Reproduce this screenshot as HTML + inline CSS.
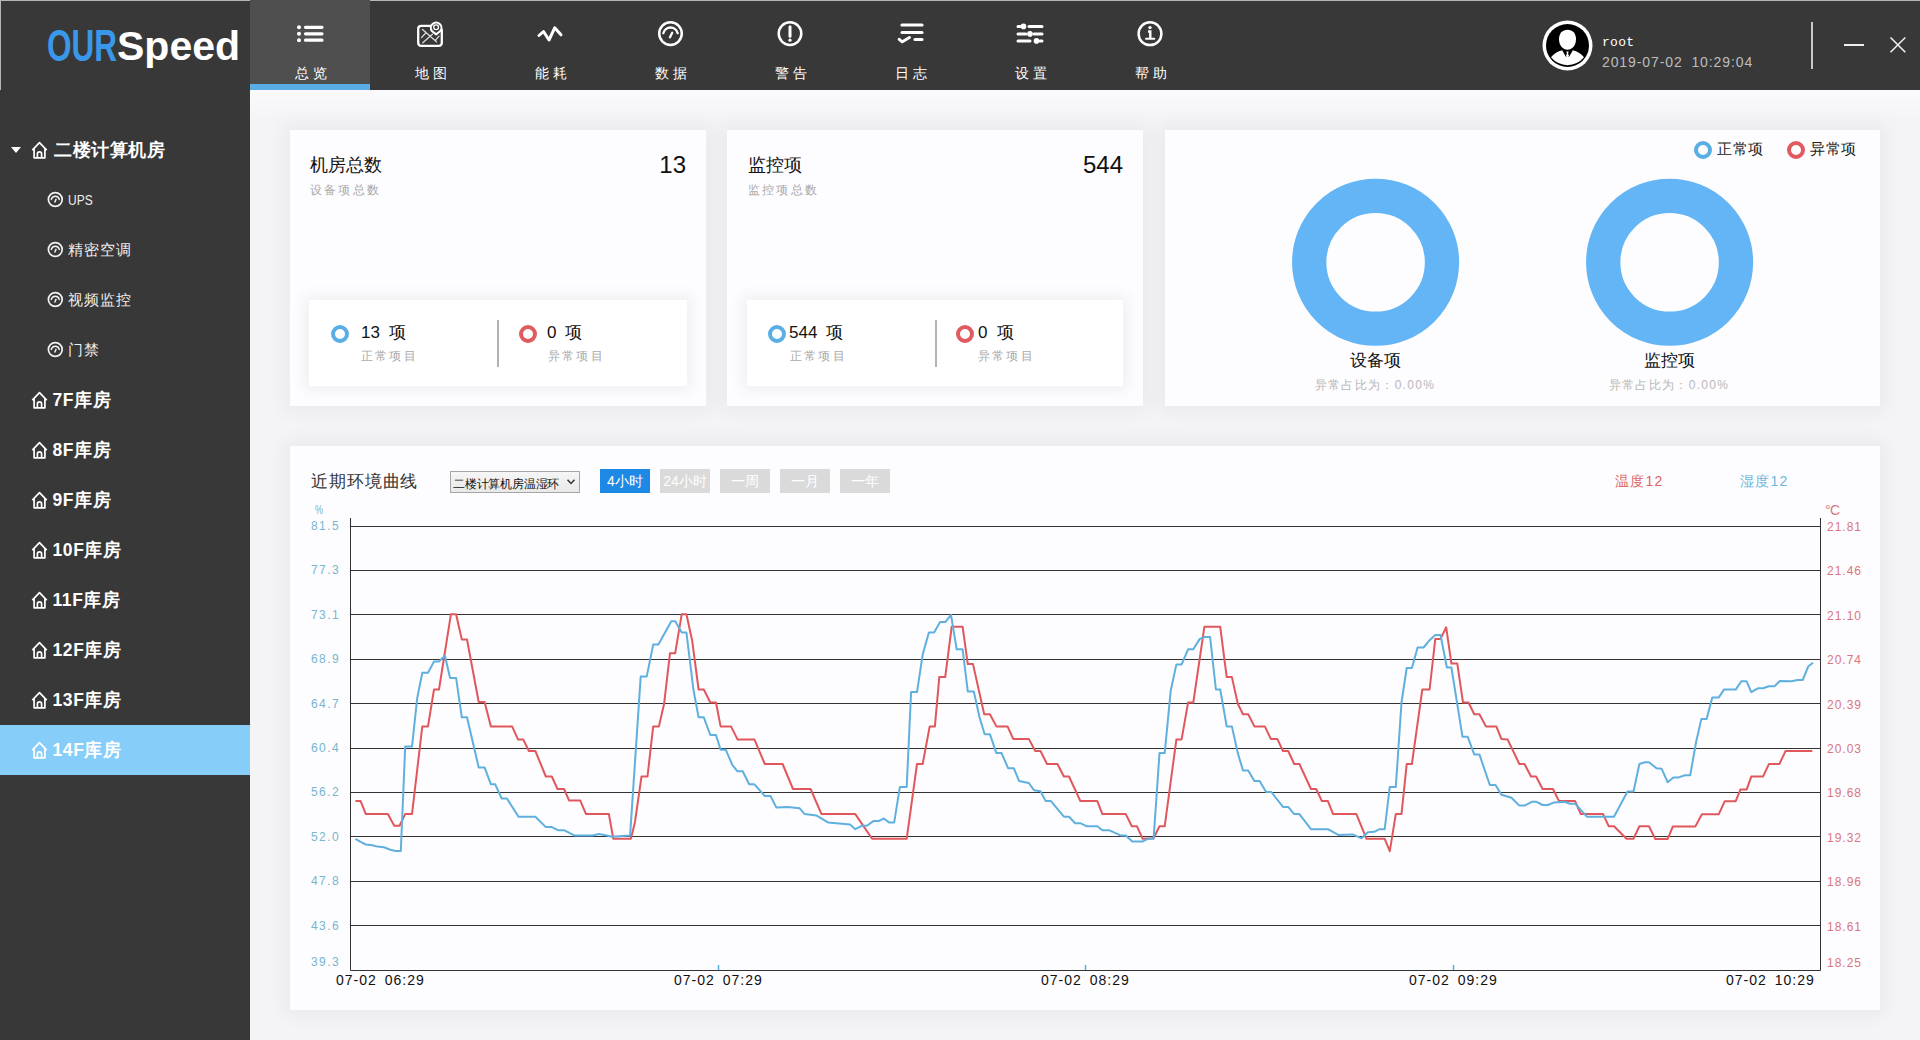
<!DOCTYPE html>
<html><head><meta charset="utf-8">
<style>
*{box-sizing:border-box;margin:0;padding:0}
html,body{width:1920px;height:1040px;overflow:hidden;background:#f4f3f5;font-family:"Liberation Sans",sans-serif}
.abs{position:absolute}
#hdr{left:0;top:0;width:1920px;height:90px;background:#383838;border-top:1px solid #b5b5b5}
#logo{left:48px;top:20px;font-size:41px;font-weight:bold;line-height:46px;white-space:nowrap}
.tab{top:0;width:120px;height:90px;color:#fff}
.tab.on{background:#4f4f4f}
.tab .lb{position:absolute;left:1px;width:120px;top:65px;text-align:center;font-size:14px;letter-spacing:4px;text-indent:4px;line-height:16px}
.tab svg{position:absolute;left:44px;top:18px}
#side{left:0;top:90px;width:250px;height:950px;background:#383838}
.it{left:0;width:250px;height:50px;color:#fff}
.it .t{position:absolute;left:52.5px;top:17.2px;font-size:17.5px;font-weight:bold;line-height:18px;letter-spacing:0.6px;white-space:nowrap}
.it .s{position:absolute;left:68px;top:18.3px;font-size:15px;line-height:16px;letter-spacing:0.9px;white-space:nowrap;color:#eee}
.it svg.h{position:absolute;left:30.5px;top:16.5px}
.it svg.g{position:absolute;left:47px;top:17px}
.card{background:#fdfcfe;box-shadow:0 0 18px 6px rgba(0,0,0,0.045)}
.inner{background:#fff;box-shadow:0 0 14px 5px rgba(0,0,0,0.055)}
.ct{font-size:18px;line-height:20px;color:#111;white-space:nowrap;margin-top:1px}
.cs{font-size:12px;line-height:14px;color:#aaa;letter-spacing:2.2px;white-space:nowrap;margin-top:1px}
.num{font-size:24px;line-height:26px;color:#111;text-align:right;white-space:nowrap}
.ring{width:18px;height:18px;border-radius:50%;border:4px solid #5aaee6}
.ring.r{border-color:#e05a5f}
.vn{font-size:17px;line-height:18px;color:#111;white-space:nowrap}
.btn{top:469px;width:50px;height:24px;font-size:14px;line-height:25px;text-align:center;color:#fff;background:#dadada}
.yl{font-size:12px;line-height:12px;color:#78b6cf;letter-spacing:1.4px;white-space:nowrap;margin-top:0}
.yr{font-size:12px;line-height:12px;color:#d9777c;letter-spacing:1px;white-space:nowrap;margin-top:1px}
.xl{font-size:14px;line-height:14px;color:#111;white-space:nowrap;letter-spacing:1px;word-spacing:3px;margin-top:0}
</style></head><body>
<div id="hdr" class="abs"></div>
<div id="logo" class="abs" style="color:#3a98ea;font-size:45px;top:23px;left:47px;transform:scaleX(0.70);transform-origin:0 0">OUR</div><div class="abs" style="left:117px;top:23px;font-size:41px;font-weight:bold;line-height:46px;color:#fff">Speed</div>
<div class="abs" style="left:0;top:0;width:1px;height:90px;background:#b5b5b5"></div>

<!-- tabs -->
<div class="abs tab on" style="left:250px"><div class="lb">总览</div></div>
<div class="abs" style="left:250px;top:84px;width:120px;height:6px;background:#5aaee6"></div>
<div class="abs tab" style="left:370px"><div class="lb">地图</div></div>
<div class="abs tab" style="left:490px"><div class="lb">能耗</div></div>
<div class="abs tab" style="left:610px"><div class="lb">数据</div></div>
<div class="abs tab" style="left:730px"><div class="lb">警告</div></div>
<div class="abs tab" style="left:850px"><div class="lb">日志</div></div>
<div class="abs tab" style="left:970px"><div class="lb">设置</div></div>
<div class="abs tab" style="left:1090px"><div class="lb">帮助</div></div>


<!-- header icons -->
<svg class="abs" style="left:290px;top:18px" width="40" height="32" viewBox="290 18 40 32" fill="none" stroke="#fff" stroke-linecap="round">
<circle cx="299" cy="27.3" r="2" fill="#fff" stroke="none"/><circle cx="299" cy="33.8" r="2" fill="#fff" stroke="none"/><circle cx="299" cy="40.2" r="2" fill="#fff" stroke="none"/>
<path d="M305.5 27.3H322M305.5 33.8H322M305.5 40.2H322" stroke-width="3.2"/></svg>
<svg class="abs" style="left:410px;top:14px" width="40" height="40" viewBox="410 14 40 40" fill="none" stroke="#fff" stroke-linecap="round" stroke-linejoin="round">
<path d="M430.5 25.9H421.2Q418.2 25.9 418.2 28.9V42.8Q418.2 45.8 421.2 45.8H438.8Q441.8 45.8 441.8 42.8V30" stroke-width="2.3"/>
<path d="M436.1 34.3L431.9 31A5.3 5.3 0 1 1 440.4 31Z" stroke-width="2.1"/>
<circle cx="436.1" cy="27.3" r="2.4" stroke-width="1.3"/>
<path d="M422.5 29.4L436.5 41.8M421.5 37.6L426.1 32.5M422.8 42.7L432.4 34.3M435.5 40.2L439 36.1" stroke-width="1.3" stroke="#ddd"/></svg>
<svg class="abs" style="left:530px;top:18px" width="40" height="32" viewBox="530 18 40 32" fill="none" stroke="#fff" stroke-width="3" stroke-linecap="round" stroke-linejoin="round">
<path d="M539 35.5L543.5 31.5L549 40L554.7 27.8L561 34.8"/></svg>
<svg class="abs" style="left:650px;top:14px" width="40" height="40" viewBox="650 14 40 40" fill="none" stroke="#fff" stroke-linecap="round">
<circle cx="670.5" cy="33.6" r="11.3" stroke-width="2.5"/>
<path d="M663.3 33.2A7.4 7.4 0 0 1 677.7 33.2" stroke-width="2.3"/>
<path d="M670 37.2L672.2 32.8" stroke-width="2.3"/></svg>
<svg class="abs" style="left:770px;top:14px" width="40" height="40" viewBox="770 14 40 40" fill="none" stroke="#fff" stroke-linecap="round">
<circle cx="790" cy="33.6" r="11.3" stroke-width="2.5"/>
<path d="M790 26.8V36.2" stroke-width="3"/><circle cx="790" cy="40.2" r="1.6" fill="#fff" stroke="none"/></svg>
<svg class="abs" style="left:890px;top:14px" width="40" height="40" viewBox="890 14 40 40" fill="none" stroke="#fff" stroke-linecap="round" stroke-linejoin="round">
<path d="M902 25H922M902 32.5H922M915 39.5H922" stroke-width="3.2"/>
<path d="M899.2 39.3L902.3 41.8L909.5 37.5" stroke-width="3"/></svg>
<svg class="abs" style="left:1010px;top:14px" width="40" height="40" viewBox="1010 14 40 40" fill="none" stroke="#fff" stroke-linecap="round">
<path d="M1018 26.4H1021M1029 26.4H1042M1018 33.9H1026M1034 33.9H1042M1018 40.9H1030M1040 40.9H1042" stroke-width="3"/>
<circle cx="1023.5" cy="26.4" r="2.8" fill="#fff" stroke="none"/><circle cx="1030" cy="33.9" r="2.8" fill="#fff" stroke="none"/><circle cx="1036.5" cy="40.9" r="2.8" fill="#fff" stroke="none"/></svg>
<svg class="abs" style="left:1130px;top:14px" width="40" height="40" viewBox="1130 14 40 40" fill="none" stroke="#fff" stroke-linecap="round">
<circle cx="1150" cy="33.7" r="11.4" stroke-width="2.5"/>
<circle cx="1150" cy="27.6" r="1.7" fill="#fff" stroke="none"/>
<path d="M1148 31.5H1150.3V38" stroke-width="2.4" stroke-linecap="butt"/><path d="M1146 38.7H1154.3" stroke-width="2"/></svg>

<!-- user -->
<svg class="abs" style="left:1540px;top:18px" width="56" height="56" viewBox="1540 18 56 56">
<circle cx="1567.5" cy="45.5" r="25" fill="#fff"/><circle cx="1567.5" cy="45.5" r="21.5" fill="#000"/>
<path d="M1567.5 29.8C1572.5 29.8 1576.2 33.5 1576 39.5C1575.8 45.5 1572 49.8 1567.5 49.8C1563 49.8 1559.2 45.5 1559 39.5C1558.8 33.5 1562.5 29.8 1567.5 29.8Z" fill="#fff"/>
<path d="M1551 57.3Q1555.5 51.6 1562.2 50.2L1566 57L1569 57L1572.8 50.2Q1579.5 51.6 1584 57.3A21.2 21.2 0 0 1 1551 57.3Z" fill="#fff"/>
<path d="M1566.4 51.6H1568.6L1568.1 53.6L1569.1 56.2L1567.5 57.6L1565.9 56.2L1566.9 53.6Z" fill="#fff"/></svg>
<div class="abs" style="left:1602px;top:35px;font-family:'Liberation Mono',monospace;font-size:13px;line-height:16px;color:#fff;letter-spacing:0.3px">root</div>
<div class="abs" style="left:1602px;top:54px;font-size:14px;line-height:16px;color:#bdbdbd;letter-spacing:0.9px;word-spacing:4px">2019-07-02 10:29:04</div>
<div class="abs" style="left:1811px;top:22px;width:2px;height:47px;background:#c9c9c9"></div>
<div class="abs" style="left:1844px;top:44px;width:20px;height:2px;background:#eee"></div>
<svg class="abs" style="left:1886px;top:33px" width="24" height="24" viewBox="1886 33 24 24" stroke="#eee" stroke-width="1.6"><path d="M1890.5 37.5L1905.3 52.3M1905.3 37.5L1890.5 52.3"/></svg>

<!-- sidebar -->
<div id="side" class="abs"></div>
<div class="abs" style="left:0;top:725px;width:250px;height:50px;background:#87cdfa"></div>
<svg class="abs" style="left:10px;top:146px" width="12" height="8" viewBox="0 0 12 8"><path d="M1 1H11L6 7Z" fill="#fff"/></svg>
<div class="abs it" style="top:124px"><svg class="h" width="18" height="19" viewBox="0 0 18 19" fill="none" stroke="#fff" stroke-width="1.7" stroke-linejoin="round"><path d="M1.3 9.1L8.5 1.6L15.7 9.1M3.1 7.4V16.8H13.9V7.4M6.4 16.8V12.9Q6.4 10.9 8.5 10.9Q10.6 10.9 10.6 12.9V16.8"/></svg><div class="t" style="left:54px">二楼计算机房</div></div>
<div class="abs it" style="top:174px"><svg class="g" width="17" height="17" viewBox="0 0 17 17" fill="none" stroke="#f2f2f2" stroke-linecap="round"><circle cx="8.3" cy="8.5" r="6.9" stroke-width="1.7"/><path d="M4.3 8.4A4.1 4.1 0 0 1 12.3 8.4" stroke-width="1.5"/><path d="M7.9 11L9 8.4" stroke-width="1.5"/></svg><div class="s" style="letter-spacing:0;transform:scaleX(0.8);transform-origin:0 0">UPS</div></div>
<div class="abs it" style="top:224px"><svg class="g" width="17" height="17" viewBox="0 0 17 17" fill="none" stroke="#f2f2f2" stroke-linecap="round"><circle cx="8.3" cy="8.5" r="6.9" stroke-width="1.7"/><path d="M4.3 8.4A4.1 4.1 0 0 1 12.3 8.4" stroke-width="1.5"/><path d="M7.9 11L9 8.4" stroke-width="1.5"/></svg><div class="s">精密空调</div></div>
<div class="abs it" style="top:274px"><svg class="g" width="17" height="17" viewBox="0 0 17 17" fill="none" stroke="#f2f2f2" stroke-linecap="round"><circle cx="8.3" cy="8.5" r="6.9" stroke-width="1.7"/><path d="M4.3 8.4A4.1 4.1 0 0 1 12.3 8.4" stroke-width="1.5"/><path d="M7.9 11L9 8.4" stroke-width="1.5"/></svg><div class="s">视频监控</div></div>
<div class="abs it" style="top:324px"><svg class="g" width="17" height="17" viewBox="0 0 17 17" fill="none" stroke="#f2f2f2" stroke-linecap="round"><circle cx="8.3" cy="8.5" r="6.9" stroke-width="1.7"/><path d="M4.3 8.4A4.1 4.1 0 0 1 12.3 8.4" stroke-width="1.5"/><path d="M7.9 11L9 8.4" stroke-width="1.5"/></svg><div class="s">门禁</div></div>
<div class="abs it" style="top:374px"><svg class="h" width="18" height="19" viewBox="0 0 18 19" fill="none" stroke="#fff" stroke-width="1.7" stroke-linejoin="round"><path d="M1.3 9.1L8.5 1.6L15.7 9.1M3.1 7.4V16.8H13.9V7.4M6.4 16.8V12.9Q6.4 10.9 8.5 10.9Q10.6 10.9 10.6 12.9V16.8"/></svg><div class="t">7F库房</div></div>
<div class="abs it" style="top:424px"><svg class="h" width="18" height="19" viewBox="0 0 18 19" fill="none" stroke="#fff" stroke-width="1.7" stroke-linejoin="round"><path d="M1.3 9.1L8.5 1.6L15.7 9.1M3.1 7.4V16.8H13.9V7.4M6.4 16.8V12.9Q6.4 10.9 8.5 10.9Q10.6 10.9 10.6 12.9V16.8"/></svg><div class="t">8F库房</div></div>
<div class="abs it" style="top:474px"><svg class="h" width="18" height="19" viewBox="0 0 18 19" fill="none" stroke="#fff" stroke-width="1.7" stroke-linejoin="round"><path d="M1.3 9.1L8.5 1.6L15.7 9.1M3.1 7.4V16.8H13.9V7.4M6.4 16.8V12.9Q6.4 10.9 8.5 10.9Q10.6 10.9 10.6 12.9V16.8"/></svg><div class="t">9F库房</div></div>
<div class="abs it" style="top:524px"><svg class="h" width="18" height="19" viewBox="0 0 18 19" fill="none" stroke="#fff" stroke-width="1.7" stroke-linejoin="round"><path d="M1.3 9.1L8.5 1.6L15.7 9.1M3.1 7.4V16.8H13.9V7.4M6.4 16.8V12.9Q6.4 10.9 8.5 10.9Q10.6 10.9 10.6 12.9V16.8"/></svg><div class="t">10F库房</div></div>
<div class="abs it" style="top:574px"><svg class="h" width="18" height="19" viewBox="0 0 18 19" fill="none" stroke="#fff" stroke-width="1.7" stroke-linejoin="round"><path d="M1.3 9.1L8.5 1.6L15.7 9.1M3.1 7.4V16.8H13.9V7.4M6.4 16.8V12.9Q6.4 10.9 8.5 10.9Q10.6 10.9 10.6 12.9V16.8"/></svg><div class="t">11F库房</div></div>
<div class="abs it" style="top:624px"><svg class="h" width="18" height="19" viewBox="0 0 18 19" fill="none" stroke="#fff" stroke-width="1.7" stroke-linejoin="round"><path d="M1.3 9.1L8.5 1.6L15.7 9.1M3.1 7.4V16.8H13.9V7.4M6.4 16.8V12.9Q6.4 10.9 8.5 10.9Q10.6 10.9 10.6 12.9V16.8"/></svg><div class="t">12F库房</div></div>
<div class="abs it" style="top:674px"><svg class="h" width="18" height="19" viewBox="0 0 18 19" fill="none" stroke="#fff" stroke-width="1.7" stroke-linejoin="round"><path d="M1.3 9.1L8.5 1.6L15.7 9.1M3.1 7.4V16.8H13.9V7.4M6.4 16.8V12.9Q6.4 10.9 8.5 10.9Q10.6 10.9 10.6 12.9V16.8"/></svg><div class="t">13F库房</div></div>
<div class="abs it" style="top:724px"><svg class="h" width="18" height="19" viewBox="0 0 18 19" fill="none" stroke="#fff" stroke-width="1.7" stroke-linejoin="round"><path d="M1.3 9.1L8.5 1.6L15.7 9.1M3.1 7.4V16.8H13.9V7.4M6.4 16.8V12.9Q6.4 10.9 8.5 10.9Q10.6 10.9 10.6 12.9V16.8"/></svg><div class="t">14F库房</div></div>

<div class="abs" style="left:250px;top:90px;width:1670px;height:30px;background:linear-gradient(#faf9fb,#f4f3f5)"></div>
<!-- cards -->
<div class="abs card" style="left:290px;top:130px;width:416px;height:276px"></div>
<div class="abs card" style="left:727px;top:130px;width:416px;height:276px"></div>
<div class="abs card" style="left:1165px;top:130px;width:715px;height:276px"></div>
<div class="abs card" style="left:290px;top:446px;width:1590px;height:564px"></div>


<!-- card1 -->
<div class="abs ct" style="left:310px;top:154px">机房总数</div>
<div class="abs cs" style="left:310px;top:182px">设备项总数</div>
<div class="abs num" style="left:586px;top:152px;width:100px;font-size:24px">13</div>
<div class="abs inner" style="left:309px;top:300px;width:378px;height:86px"></div>
<div class="abs ring" style="left:331px;top:325px;width:18px;height:18px;border-width:4px"></div>
<div class="abs vn" style="left:361px;top:324px">13<span style="margin-left:9px">项</span></div>
<div class="abs cs" style="left:361px;top:348px">正常项目</div>
<div class="abs" style="left:497px;top:320px;width:2px;height:47px;background:#b3b3b3"></div>
<div class="abs ring r" style="left:519px;top:325px;width:18px;height:18px;border-width:4px"></div>
<div class="abs vn" style="left:547px;top:324px">0<span style="margin-left:9px">项</span></div>
<div class="abs cs" style="left:548px;top:348px">异常项目</div>
<!-- card2 -->
<div class="abs ct" style="left:748px;top:154px">监控项</div>
<div class="abs cs" style="left:748px;top:182px">监控项总数</div>
<div class="abs num" style="left:1023px;top:152px;width:100px;font-size:24px">544</div>
<div class="abs inner" style="left:747px;top:300px;width:376px;height:86px"></div>
<div class="abs ring" style="left:768px;top:325px;width:18px;height:18px;border-width:4px"></div>
<div class="abs vn" style="left:789px;top:324px">544<span style="margin-left:9px">项</span></div>
<div class="abs cs" style="left:790px;top:348px">正常项目</div>
<div class="abs" style="left:935px;top:320px;width:2px;height:47px;background:#b3b3b3"></div>
<div class="abs ring r" style="left:956px;top:325px;width:18px;height:18px;border-width:4px"></div>
<div class="abs vn" style="left:978px;top:324px">0<span style="margin-left:10px">项</span></div>
<div class="abs cs" style="left:978px;top:348px">异常项目</div>
<!-- card3 -->
<div class="abs ring" style="left:1694px;top:141px;width:18px;height:18px;border-width:4px"></div>
<div class="abs" style="left:1717px;top:140px;font-size:15px;line-height:17px;color:#222;letter-spacing:0.5px">正常项</div>
<div class="abs ring r" style="left:1787px;top:141px;width:18px;height:18px;border-width:4px"></div>
<div class="abs" style="left:1810px;top:140px;font-size:15px;line-height:17px;color:#222;letter-spacing:0.5px">异常项</div>
<svg class="abs" style="left:1285px;top:172px" width="480" height="180" viewBox="1285 172 480 180">
<circle cx="1375.6" cy="262.3" r="66.4" fill="none" stroke="#64b5f6" stroke-width="34.3"/>
<circle cx="1669.6" cy="262.3" r="66.4" fill="none" stroke="#64b5f6" stroke-width="34.3"/></svg>
<div class="abs" style="left:1275px;top:351px;width:200px;text-align:center;font-size:17px;line-height:20px;color:#111;font-weight:500">设备项</div>
<div class="abs cs" style="left:1275px;top:377px;width:200px;text-align:center;color:#b8b8b8;letter-spacing:1.3px">异常占比为：0.00%</div>
<div class="abs" style="left:1569px;top:351px;width:200px;text-align:center;font-size:17px;line-height:20px;color:#111;font-weight:500">监控项</div>
<div class="abs cs" style="left:1569px;top:377px;width:200px;text-align:center;color:#b8b8b8;letter-spacing:1.3px">异常占比为：0.00%</div>

<!-- chart -->
<div class="abs" style="left:311px;top:472px;font-size:17px;line-height:20px;color:#333;letter-spacing:0.9px">近期环境曲线</div>
<div class="abs" style="left:450px;top:471px;width:130px;height:22px;border:1px solid #a6a6a6;background:linear-gradient(#f6f6f6,#e9e9e9)"></div>
<div class="abs" style="left:453px;top:476px;font-size:12px;line-height:16px;color:#111;letter-spacing:-0.2px">二楼计算机房温湿环</div>
<svg class="abs" style="left:566px;top:478px" width="10" height="8" viewBox="0 0 10 8"><path d="M1.5 1.8L5 5.5L8.5 1.8" fill="none" stroke="#333" stroke-width="1.5"/></svg>
<div class="abs btn" style="left:600px;background:#1e88e5">4小时</div>
<div class="abs btn" style="left:660px">24小时</div>
<div class="abs btn" style="left:720px">一周</div>
<div class="abs btn" style="left:780px">一月</div>
<div class="abs btn" style="left:840px">一年</div>
<div class="abs" style="left:1615px;top:473px;font-size:14px;line-height:16px;color:#de6464;letter-spacing:1.2px">温度12</div>
<div class="abs" style="left:1740px;top:473px;font-size:14px;line-height:16px;color:#6ab7dc;letter-spacing:1.2px">湿度12</div>
<div class="abs yl" style="left:315px;top:504px;font-size:12px;letter-spacing:0;transform:scaleX(0.75);transform-origin:0 0">%</div>
<div class="abs yr" style="left:1825px;top:503px;font-size:14px;letter-spacing:-0.5px">&deg;C</div>
<div class="abs yl" style="left:311px;top:520px">81.5</div>
<div class="abs yr" style="left:1827px;top:520px">21.81</div>
<div class="abs yl" style="left:311px;top:564px">77.3</div>
<div class="abs yr" style="left:1827px;top:564px">21.46</div>
<div class="abs yl" style="left:311px;top:609px">73.1</div>
<div class="abs yr" style="left:1827px;top:609px">21.10</div>
<div class="abs yl" style="left:311px;top:653px">68.9</div>
<div class="abs yr" style="left:1827px;top:653px">20.74</div>
<div class="abs yl" style="left:311px;top:698px">64.7</div>
<div class="abs yr" style="left:1827px;top:698px">20.39</div>
<div class="abs yl" style="left:311px;top:742px">60.4</div>
<div class="abs yr" style="left:1827px;top:742px">20.03</div>
<div class="abs yl" style="left:311px;top:786px">56.2</div>
<div class="abs yr" style="left:1827px;top:786px">19.68</div>
<div class="abs yl" style="left:311px;top:831px">52.0</div>
<div class="abs yr" style="left:1827px;top:831px">19.32</div>
<div class="abs yl" style="left:311px;top:875px">47.8</div>
<div class="abs yr" style="left:1827px;top:875px">18.96</div>
<div class="abs yl" style="left:311px;top:920px">43.6</div>
<div class="abs yr" style="left:1827px;top:920px">18.61</div>
<div class="abs yl" style="left:311px;top:956px">39.3</div>
<div class="abs yr" style="left:1827px;top:956px">18.25</div>
<svg class="abs" style="left:290px;top:446px" width="1590" height="564" viewBox="290 446 1590 564">
<g stroke="#333" stroke-width="1" fill="none"><path d="M350 526.5H1821" /><path d="M350 570.5H1821" /><path d="M350 614.5H1821" /><path d="M350 659.5H1821" /><path d="M350 703.5H1821" /><path d="M350 748.5H1821" /><path d="M350 792.5H1821" /><path d="M350 836.5H1821" /><path d="M350 881.5H1821" /><path d="M350 925.5H1821" /><path d="M350.5 518V970.5H1820.5V518"/></g>
<g stroke="#5aaee0" stroke-width="1.5"><path d="M718.5 965V970M1085.5 965V970M1453.5 965V970"/></g>
<g id="curves"><g fill="none" stroke-width="2" stroke-linejoin="round"><path stroke="#e0575c" d="M355.4 801.1 L360.6 801.1 L365.8 814.1 L387.8 814.1 L394.3 825.8 L399.5 825.8 L405.2 814.1 L412.0 814.1 L422.3 726.4 L428.0 726.4 L434.0 689.5 L439.0 689.5 L450.9 614.3 L456.1 614.3 L461.8 639.5 L467.0 639.5 L478.7 702.0 L484.6 702.0 L490.9 726.4 L512.1 726.4 L518.0 739.4 L523.2 739.4 L528.9 751.0 L535.4 751.0 L545.8 776.5 L551.8 776.5 L557.5 789.0 L564.0 789.0 L569.2 800.6 L580.3 800.6 L586.0 814.1 L608.9 814.1 L613.3 838.8 L630.9 838.8 L635.0 821.9 L641.5 776.5 L647.5 776.5 L653.2 726.4 L658.9 726.4 L664.1 703.8 L670.0 653.2 L675.2 653.2 L681.7 614.3 L686.4 614.3 L692.1 640.2 L698.6 689.5 L703.8 689.5 L710.3 702.5 L716.0 702.5 L720.6 726.4 L731.0 726.4 L737.5 739.4 L754.4 739.4 L764.8 764.0 L782.6 764.0 L793.0 789.0 L810.6 789.0 L821.5 814.1 L855.3 814.1 L872.1 838.8 L906.7 838.8 L917.0 764.0 L922.7 764.0 L929.7 726.4 L934.9 726.4 L939.3 677.1 L945.2 677.1 L951.7 626.7 L962.6 626.7 L967.8 664.1 L973.0 664.1 L984.2 714.2 L989.9 714.2 L996.4 726.4 L1007.5 726.4 L1013.2 738.9 L1028.8 738.9 L1035.3 751.0 L1040.5 751.0 L1047.0 764.0 L1057.4 764.0 L1063.9 776.5 L1069.0 776.5 L1080.4 801.1 L1097.3 801.1 L1102.4 814.1 L1125.8 814.1 L1131.8 826.3 L1137.0 826.3 L1142.7 838.8 L1153.6 838.3 L1159.5 826.3 L1164.7 826.3 L1176.4 739.4 L1181.6 739.4 L1188.1 702.5 L1193.3 702.5 L1204.4 626.7 L1220.2 626.7 L1226.7 677.1 L1231.9 677.1 L1237.8 703.8 L1243.0 714.2 L1248.2 714.2 L1254.4 726.4 L1264.8 726.4 L1270.8 738.9 L1277.3 738.9 L1283.0 751.0 L1288.2 751.0 L1294.2 764.0 L1299.4 764.0 L1311.0 789.0 L1316.2 789.0 L1321.9 801.1 L1327.9 801.1 L1333.1 814.1 L1356.4 814.1 L1366.5 838.8 L1384.7 838.8 L1389.8 851.2 L1395.8 814.1 L1401.5 814.1 L1406.7 764.0 L1411.9 764.0 L1422.3 689.5 L1429.6 689.5 L1435.3 638.9 L1440.5 638.9 L1446.2 627.3 L1451.4 663.6 L1457.3 663.6 L1463.0 702.5 L1468.5 702.5 L1474.2 714.2 L1479.4 714.2 L1485.9 726.4 L1496.3 726.4 L1501.4 738.9 L1507.6 739.4 L1519.3 764.0 L1524.5 764.0 L1531.0 776.5 L1536.1 776.5 L1542.6 789.0 L1553.0 789.0 L1559.0 801.1 L1575.1 801.1 L1580.8 814.1 L1603.1 814.1 L1608.8 826.3 L1614.0 826.3 L1626.5 838.8 L1633.5 838.8 L1639.4 826.3 L1649.0 826.3 L1655.2 838.9 L1667.7 838.9 L1672.9 826.4 L1695.4 826.4 L1701.9 814.2 L1718.8 814.2 L1724.8 801.2 L1735.7 801.2 L1740.4 789.6 L1746.6 789.6 L1751.3 776.6 L1763.0 776.6 L1768.9 764.1 L1779.3 764.1 L1785.5 751.1 L1812.3 751.1"/><path stroke="#5fb0df" d="M355.4 838.8 L360.6 841.9 L365.8 844.5 L372.3 845.3 L377.4 846.6 L383.9 847.3 L390.4 849.7 L395.6 851.0 L400.8 851.0 L405.2 746.6 L412.0 746.6 L417.2 698.1 L422.3 672.7 L428.0 672.7 L434.0 661.5 L439.0 661.5 L444.9 655.8 L450.1 677.9 L456.1 677.9 L461.8 717.3 L467.0 717.3 L478.7 767.4 L484.6 767.4 L490.9 784.3 L495.2 784.3 L501.7 798.5 L506.9 798.5 L518.5 816.7 L535.4 816.7 L545.8 827.1 L551.8 827.1 L558.0 830.2 L564.0 830.2 L574.3 835.4 L592.5 835.4 L599.0 834.1 L604.2 834.9 L612.0 836.7 L630.1 835.4 L640.7 676.6 L646.7 676.6 L653.2 644.6 L658.4 644.6 L671.3 621.3 L675.2 621.3 L681.7 632.4 L686.4 632.4 L693.4 689.5 L698.6 717.3 L703.8 717.3 L710.3 735.0 L716.0 735.0 L720.6 749.8 L725.8 749.8 L732.3 764.8 L737.5 771.3 L742.7 771.3 L749.2 784.3 L754.4 784.3 L764.8 796.0 L770.5 796.0 L776.4 807.6 L787.8 807.1 L799.5 808.2 L804.7 814.1 L816.3 815.4 L828.0 822.4 L850.1 824.5 L855.3 829.2 L861.8 825.8 L866.9 825.8 L873.4 821.1 L878.6 821.1 L883.8 818.5 L889.0 822.4 L894.2 822.4 L899.9 786.9 L906.7 786.9 L911.1 692.1 L917.0 692.1 L922.7 654.5 L928.9 632.4 L934.1 632.4 L940.1 622.1 L945.2 622.1 L951.0 614.8 L956.7 649.3 L962.6 649.3 L967.8 691.4 L973.8 691.4 L979.5 717.3 L984.7 734.2 L989.9 734.2 L996.4 753.1 L1001.6 753.1 L1008.1 768.2 L1013.8 768.2 L1019.0 780.9 L1028.8 783.0 L1034.0 790.2 L1040.5 791.3 L1045.7 801.1 L1050.9 801.1 L1063.9 816.7 L1069.0 816.7 L1075.2 823.2 L1080.4 823.2 L1086.9 826.3 L1097.3 826.3 L1102.4 830.2 L1108.9 830.2 L1120.6 835.4 L1125.8 835.4 L1132.3 841.4 L1142.7 841.4 L1147.9 838.8 L1153.6 838.8 L1159.5 753.1 L1164.7 753.1 L1170.7 690.8 L1176.4 664.4 L1181.6 664.4 L1188.1 649.3 L1193.3 649.3 L1199.8 638.9 L1204.4 637.1 L1210.1 637.1 L1215.9 689.5 L1220.2 689.5 L1226.7 726.4 L1231.9 726.4 L1237.8 753.1 L1243.0 770.5 L1248.2 770.5 L1254.4 780.9 L1259.6 780.9 L1266.1 792.0 L1271.3 792.0 L1283.0 806.9 L1288.2 806.9 L1294.2 814.1 L1299.4 814.1 L1311.0 829.2 L1327.9 829.2 L1338.3 834.9 L1352.6 834.4 L1361.6 838.3 L1367.8 832.3 L1374.3 831.8 L1379.5 829.2 L1384.7 829.2 L1389.8 786.9 L1395.8 786.9 L1401.5 702.5 L1406.7 668.0 L1411.9 668.0 L1417.6 647.5 L1423.6 647.5 L1429.6 640.2 L1435.3 635.0 L1440.5 635.0 L1446.9 667.5 L1451.4 667.5 L1462.5 736.8 L1467.7 736.8 L1474.2 754.4 L1479.4 754.4 L1489.8 785.0 L1495.5 785.0 L1501.4 794.7 L1511.5 797.8 L1519.3 805.6 L1524.5 805.6 L1532.3 801.7 L1536.1 801.7 L1542.6 805.0 L1547.8 805.0 L1554.3 802.4 L1564.7 801.7 L1569.9 803.7 L1575.1 803.7 L1586.8 816.7 L1614.0 816.7 L1627.5 791.5 L1633.5 791.5 L1639.4 764.0 L1645.1 762.2 L1649.0 762.2 L1656.5 768.3 L1661.7 768.8 L1667.7 782.3 L1673.4 777.4 L1678.6 777.4 L1685.1 775.3 L1690.2 775.3 L1696.2 741.5 L1701.4 718.9 L1706.6 718.9 L1712.3 697.4 L1718.8 697.4 L1724.0 689.6 L1735.7 689.6 L1741.4 681.3 L1746.6 681.3 L1751.3 692.2 L1757.8 688.3 L1763.0 688.3 L1768.9 686.2 L1774.6 686.2 L1779.8 681.0 L1791.5 681.3 L1797.5 680.0 L1802.7 680.0 L1808.4 666.2 L1813.1 662.8"/></g></g>
</svg>
<div class="abs xl" style="left:336px;top:973px">07-02 06:29</div>
<div class="abs xl" style="left:674px;top:973px">07-02 07:29</div>
<div class="abs xl" style="left:1041px;top:973px">07-02 08:29</div>
<div class="abs xl" style="left:1409px;top:973px">07-02 09:29</div>
<div class="abs xl" style="left:1726px;top:973px">07-02 10:29</div>
</body></html>
